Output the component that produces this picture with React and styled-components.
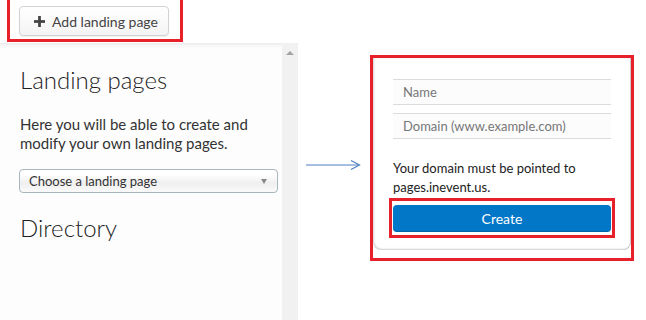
import React from "react";
import styled, { createGlobalStyle } from "styled-components";

const GlobalStyle = createGlobalStyle`
  body {
    margin: 0;
    background: #ffffff;
    font-family: Lato, "Open Sans", sans-serif;
  }
`;

export default function App() {
  return (
    <>
      <GlobalStyle />
      <Page>
        <TopBar>
          <Highlight $noTop $pad="6px 11px 3px 9px">
            <AddButton>
              <PlusIcon viewBox="0 0 12 12">
                <rect x="4.5" y="0" width="3" height="12" />
                <rect x="0" y="4.5" width="12" height="3" />
              </PlusIcon>
              Add landing page
            </AddButton>
          </Highlight>
        </TopBar>
        <Main>
          <Sidebar>
            <Panel>
              <Title>Landing pages</Title>
              <Intro>
                Here you will be able to create and modify your own landing
                pages.
              </Intro>
              <Select>
                <span>Choose a landing page</span>
                <Caret />
              </Select>
              <Title $top="20px">Directory</Title>
            </Panel>
            <Scrollbar>
              <UpArrow />
            </Scrollbar>
          </Sidebar>
          <ArrowCol>
            <svg width="56" height="12" viewBox="0 0 56 12">
              <line x1="0" y1="6" x2="53" y2="6" stroke="#4f7fbf" strokeWidth="1.2" />
              <polyline points="45,1.5 53.5,6 45,10.5" fill="none" stroke="#4f7fbf" strokeWidth="1.2" />
            </svg>
          </ArrowCol>
          <FormHighlight>
            <Card>
              <Field placeholder="Name" />
              <Field placeholder="Domain (www.example.com)" />
              <Note>Your domain must be pointed to pages.inevent.us.</Note>
              <ButtonHighlight>
                <CreateButton>Create</CreateButton>
              </ButtonHighlight>
            </Card>
          </FormHighlight>
        </Main>
      </Page>
    </>
  );
}

const Page = styled.div`
  width: 646px;
  height: 320px;
  overflow: hidden;
`;

const TopBar = styled.div`
  height: 43px;
  padding-left: 7px;
  box-sizing: border-box;
  display: flex;
  align-items: flex-start;
`;

const Highlight = styled.div`
  border: 3px solid #e8202a;
  border-top-width: ${(p) => (p.$noTop ? "0" : "3px")};
  padding: ${(p) => p.$pad || "0"};
  display: flex;
`;

const AddButton = styled.button`
  height: 30px;
  width: 150px;
  box-sizing: border-box;
  display: flex;
  align-items: center;
  gap: 7px;
  padding: 0 0 0 14px;
  border: 1px solid #d2d2d2;
  border-radius: 4px;
  background: linear-gradient(#ffffff, #f4f4f4);
  box-shadow: 0 1px 1px rgba(0, 0, 0, 0.06);
  font-family: Lato, sans-serif;
  font-size: 14px;
  color: #444;
`;

const PlusIcon = styled.svg`
  width: 11px;
  height: 11px;
  fill: #444;
`;

const Main = styled.div`
  display: flex;
  height: 277px;
`;

const Sidebar = styled.div`
  width: 298px;
  display: flex;
  background: #fdfdfd;
  box-shadow: inset 0 5px 5px -4px rgba(0, 0, 0, 0.1);
`;

const Panel = styled.div`
  flex: 1;
  padding: 22px 4px 0 20px;
`;

const Title = styled.h2`
  margin: ${(p) => p.$top || "0"} 0 0;
  font-size: 24px;
  line-height: 29px;
  font-weight: 300;
  color: #1e1e1e;
`;

const Intro = styled.p`
  margin: 21px 0 0;
  font-size: 15px;
  line-height: 19px;
  font-weight: 400;
  color: #333;
`;

const Select = styled.div`
  margin: 16px 0 0 -1px;
  height: 24px;
  box-sizing: border-box;
  display: flex;
  align-items: center;
  justify-content: space-between;
  padding: 0 10px 0 9px;
  border: 1px solid #a8b6be;
  border-radius: 4px;
  background: linear-gradient(#ffffff 20%, #efefef 60%, #fafafa);
  font-size: 13px;
  color: #333;
`;

const Caret = styled.span`
  width: 0;
  height: 0;
  border-left: 3.5px solid transparent;
  border-right: 3.5px solid transparent;
  border-top: 5px solid #888;
`;

const Scrollbar = styled.div`
  width: 16px;
  background: #f1f1f1;
  display: flex;
  justify-content: center;
  padding-top: 8px;
  box-sizing: border-box;
`;

const UpArrow = styled.span`
  width: 0;
  height: 0;
  border-left: 4px solid transparent;
  border-right: 4px solid transparent;
  border-bottom: 4px solid #a3a3a3;
`;

const ArrowCol = styled.div`
  width: 72px;
  padding: 112px 0 0 8px;
  box-sizing: border-box;
`;

const FormHighlight = styled.div`
  margin-top: 12px;
  align-self: flex-start;
  border: 3px solid #e8202a;
  padding-bottom: 8px;
`;

const Card = styled.div`
  width: 258px;
  box-sizing: border-box;
  padding: 21px 20px 12px;
  background: #fff;
  border-radius: 0 0 8px 8px;
  box-shadow: inset 1px -1px 2px rgba(0, 0, 0, 0.18),
    inset -1px 0 1px rgba(0, 0, 0, 0.22);
  display: flex;
  flex-direction: column;
`;

const Field = styled.input`
  height: 26px;
  box-sizing: border-box;
  margin-bottom: 8px;
  padding: 0 10px;
  border: none;
  border-top: 1px solid #dcdcdc;
  border-bottom: 1px solid #dcdcdc;
  background: #fcfcfc;
  font-family: Lato, sans-serif;
  font-size: 13px;
  color: #333;
  outline: none;
  &::placeholder {
    color: #777;
  }
`;

const Note = styled.p`
  margin: 12px 0 0;
  font-size: 13px;
  line-height: 19px;
  color: #222;
`;

const ButtonHighlight = styled.div`
  margin: 1px -4px 0;
  border: 3px solid #e8202a;
  padding: 4px 1px 3px;
`;

const CreateButton = styled.button`
  width: 100%;
  height: 27px;
  border: none;
  border-radius: 4px;
  background: #0277c8;
  box-shadow: inset 0 -1px 0 rgba(0, 0, 0, 0.15);
  font-family: Lato, sans-serif;
  font-size: 14px;
  color: #fff;
`;
